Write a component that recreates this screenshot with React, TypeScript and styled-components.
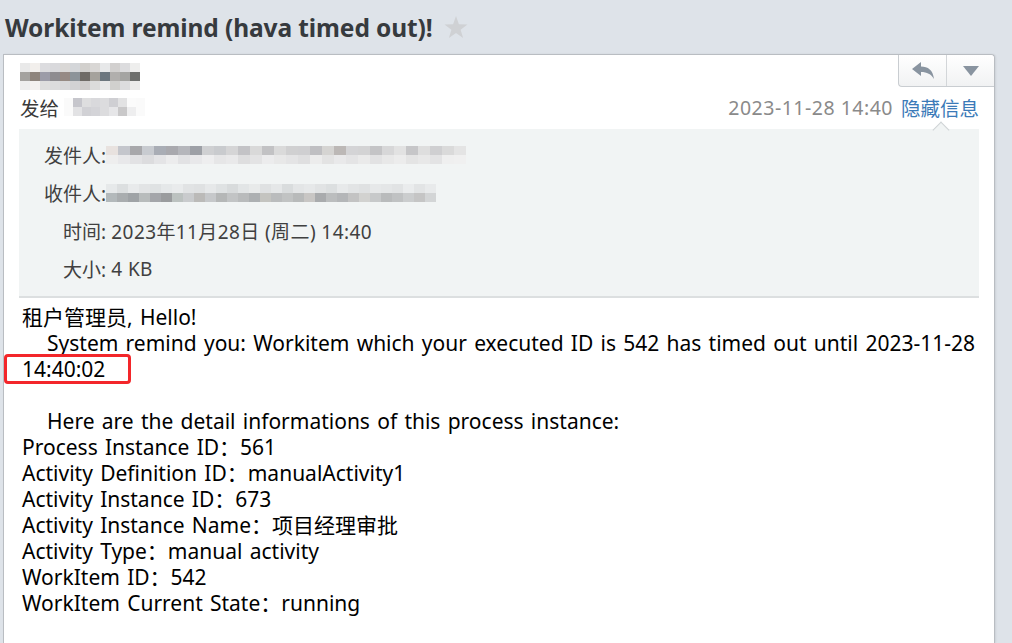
import React, { FC } from "react";
import styled, { createGlobalStyle } from "styled-components";

const GlobalStyle = createGlobalStyle`
  html, body {
    margin: 0;
    padding: 0;
    background: #dee3e9;
    font-family: "Noto Sans", "Noto Sans CJK SC", sans-serif;
    overflow: hidden;
  }
`;

const Page = styled.div`
  width: 1012px;
  height: 643px;
  padding: 10px 17px 0 3px;
  box-sizing: border-box;
  display: flex;
  flex-direction: column;
`;

const TitleRow = styled.div`
  display: flex;
  align-items: center;
  gap: 11px;
  height: 34px;
  padding-left: 2px;
`;

const Title = styled.h1`
  margin: 0;
  font-size: 24.5px;
  font-weight: 700;
  color: #363a3e;
  letter-spacing: -0.1px;
`;

const Card = styled.div`
  margin-top: 10px;
  flex: 1;
  background: #fff;
  border: 1px solid #b9bdc2;
  border-bottom: none;
  border-radius: 0 4px 0 0;
  box-shadow: 1px 0 2px rgba(0, 0, 0, 0.08);
  position: relative;
  padding: 0 15px 0 15px;
`;

const Actions = styled.div`
  position: absolute;
  top: 0;
  right: 0;
  display: flex;
  border-left: 1px solid #c9cdd1;
  border-bottom: 1px solid #c9cdd1;
  border-radius: 0 4px 0 4px;
  background: linear-gradient(#ffffff, #f1f2f3);
`;

const ActionButton = styled.div<{ $divider?: boolean }>`
  width: 47px;
  height: 31px;
  display: flex;
  align-items: center;
  justify-content: center;
  border-right: ${(p) => (p.$divider ? "1px solid #d3d6d9" : "none")};
`;

const Header = styled.div`
  padding: 8px 0 0 1px;
`;

const Pixels = styled.div<{ $w: number }>`
  display: flex;
  flex-wrap: wrap;
  width: ${(p) => p.$w}px;
  filter: blur(0.6px);
`;

const Pixel = styled.span`
  width: 10px;
  height: 8px;
`;

const SendRow = styled.div`
  display: flex;
  align-items: center;
  height: 30px;
  margin-top: 2px;
  font-size: 19.5px;
  color: #3a3a3a;
`;

const Spacer = styled.div`
  flex: 1;
`;

const DateText = styled.span`
  color: #8a8a8a;
  letter-spacing: 0.5px;
  margin-right: 8px;
`;

const HideLink = styled.a`
  color: #3b7ab8;
  text-decoration: none;
  position: relative;
`;

const Pointer = styled.span`
  position: absolute;
  left: 34px;
  bottom: -14px;
  width: 11px;
  height: 11px;
  background: #f1f4f4;
  border-left: 1px solid #cfd3d5;
  border-top: 1px solid #cfd3d5;
  transform: rotate(45deg);
`;

const Details = styled.div`
  margin-top: 7px;
  background: #f1f4f4;
  border-bottom: 2px solid #dcdfe0;
  padding: 7px 0 8px 21px;
  display: grid;
  grid-template-columns: 66px 1fr;
  grid-auto-rows: 38px;
  align-items: center;
  font-size: 19px;
  color: #404040;
`;

const Label = styled.span`
  text-align: right;
`;

const Value = styled.span`
  display: flex;
  align-items: center;
  letter-spacing: 0.4px;
`;

const Body = styled.div`
  padding: 6px 0 0 3px;
  font-size: 21px;
  line-height: 26px;
  word-spacing: 1.8px;
  color: #000;
  position: relative;
`;

const Line = styled.div<{ $indent?: boolean }>`
  text-indent: ${(p) => (p.$indent ? "25px" : "0")};
  min-height: 26px;
`;

const Highlight = styled.span`
  position: absolute;
  left: -15px;
  top: 56px;
  width: 121px;
  height: 24px;
  border: 3px solid #f3262a;
  border-radius: 4px;
`;

const blur1 = ["#e9e9e9","#f2efec","#dcdcdf","#d9d9dc","#dad8d6","#d4d6d9","#d2d0cd","#d9d7d5","#e7e8e9","#d2d0cf","#dcdcde","#eeeeed",
  "#a4a29f","#8e847c","#9c9ca8","#8e8c90","#968a84","#8c9399","#6f6b66","#a5a29c","#6c767e","#b1afad","#a4a4a2","#6e6f6d",
  "#eeeeee","#f4f1ef","#dedede","#dcdcdd","#d8d8da","#d2d2d4","#cfcccb","#dcdcdb","#e7e7e8","#d1d0ce","#dcdcde","#ecebea"];

const blurTo = ["#fafafa","#c6c6cc","#dededf","#d9d9dc","#dcdcde","#cfcfd3","#e2e2e3","#fbfbfb","#fafafa",
  "#fafafa","#e2e2e4","#d1d1d5","#d4d4d8","#dcdcde","#e6e6e8","#c9c8c9","#eeeeef","#fafafa"];

const blurFrom = ["#e8e2df","#c4c6cc","#a8a8ab","#c8cbd0","#a9adb5","#a9a9ae","#b5b6bb","#9da0a6","#cfd0d2","#c9cbce","#d5d5d6","#c3c3c6","#d9d9d9","#c2c2c4","#dadada","#d0d0d1","#cfcfd1","#bfbfc2","#d5d4d2","#bcb8b6","#d4d4d6","#d3d3d4","#c4c4c6","#d7d7d8","#e2e2e2","#c6c6c8","#dedede","#cfcfd1","#dadada","#e4e4e4",
  "#eeeeee","#e8e8ea","#e2e2e4","#dcdcde","#e4e4e6","#ececed","#e2e2e4","#e8e8ea","#eeeeef","#e6e6e7","#e9e9ea","#dededf","#e3e3e4","#ececed","#e8e8e8","#e4e4e5","#dfdfe0","#ececec","#e3e3e3","#e9e9ea","#e4e4e5","#eaeaea","#e2e2e3","#e8e8e8","#ececec","#e4e4e4","#e8e8e8","#e3e3e4","#efefef","#f0f0f0"];

const blurRecv = ["#e6e9ea","#dcdfe0","#e8eaeb","#e2e4e5","#dfe2e3","#e5e8e9","#e9ebec","#e1e3e4","#dfe1e2","#e6e8e9","#dfe2e3","#d8dbdc","#e2e5e6","#e8eaea","#dfe1e2","#e5e7e8","#d9dcdd","#e3e5e6","#e6e8e9","#e1e3e4","#dcdfe0","#e7e9ea","#e2e4e5","#dfe1e2","#e6e8e9","#e4e6e7","#e1e3e4","#eaeced","#e2e4e5","#e8eaeb",
  "#b3b9bb","#a9adaf","#9fa3a6","#b8bcbc","#a4a6aa","#9a9c9e","#bcc2c0","#c9cbcd","#bbbab8","#c6c8ca","#b5b7b7","#c2c4c5","#b9bbbc","#adb0b2","#c4c4c0","#babcbd","#c1c3c3","#b8baba","#c8c6c4","#a9abad","#bbbdbe","#b4b6b8","#c3c3c3","#d2d2d0","#c7c9ca","#b9bbbc","#c0c2c3","#cbcdce","#c5c5c5","#d3d5d6"];

const PixelStrip: FC<{ colors: string[]; cols: number; cell?: [number, number] }> = ({ colors, cols, cell = [10, 8] }) => (
  <Pixels $w={cols * cell[0]}>
    {colors.map((c, i) => (
      <Pixel key={i} style={{ background: c, width: cell[0], height: cell[1] }} />
    ))}
  </Pixels>
);

const ReplyIcon = () => (
  <svg width="24" height="18" viewBox="0 0 24 18">
    <path d="M1 7 L10 0 L10 4.5 C17 4.5 22 8 23 17 C20 12 16 10 10 10 L10 14 Z" fill="#8994a0" />
  </svg>
);

const DownIcon = () => (
  <svg width="16" height="10" viewBox="0 0 16 10">
    <path d="M0 0 H16 L8 10 Z" fill="#8994a0" />
  </svg>
);

const Star = () => (
  <svg width="24" height="23" viewBox="0 0 24 23">
    <path d="M12 0 L14.9 8.2 L23.5 8.4 L16.6 13.7 L19.1 22 L12 17 L4.9 22 L7.4 13.7 L0.5 8.4 L9.1 8.2 Z" fill="#cfd1d4" />
  </svg>
);

const rows = [
  "Process Instance ID：561",
  "Activity Definition ID：manualActivity1",
  "Activity Instance ID：673",
  "Activity Instance Name：项目经理审批",
  "Activity Type：manual activity",
  "WorkItem ID：542",
  "WorkItem Current State：running",
];

const App: FC = () => {
  return (
    <>
      <GlobalStyle />
      <Page>
        <TitleRow>
          <Title>Workitem remind (hava timed out)!</Title>
          <Star />
        </TitleRow>
        <Card>
          <Actions>
            <ActionButton $divider>
              <ReplyIcon />
            </ActionButton>
            <ActionButton>
              <DownIcon />
            </ActionButton>
          </Actions>
          <Header>
            <PixelStrip colors={blur1} cols={12} cell={[10, 9]} />
            <SendRow>
              <span>发给</span>
              <span style={{ marginLeft: 5 }}>
                <PixelStrip colors={blurTo} cols={9} cell={[9, 9]} />
              </span>
              <Spacer />
              <DateText>2023-11-28 14:40</DateText>
              <HideLink>
                隐藏信息
                <Pointer />
              </HideLink>
            </SendRow>
          </Header>
          <Details>
            <Label>发件人:</Label>
            <Value>
              <PixelStrip colors={blurFrom} cols={30} cell={[12, 9]} />
            </Value>
            <Label>收件人:</Label>
            <Value>
              <PixelStrip colors={blurRecv} cols={30} cell={[11, 9]} />
            </Value>
            <Label>时间:</Label>
            <Value>&nbsp;2023年11月28日 (周二) 14:40</Value>
            <Label>大小:</Label>
            <Value>&nbsp;4 KB</Value>
          </Details>
          <Body>
            <Line>租户管理员, Hello!</Line>
            <Line $indent>
              System remind you: Workitem which your executed ID is 542 has timed out until 2023-11-28 14:40:02
            </Line>
            <Line />
            <Line $indent>Here are the detail informations of this process instance:</Line>
            {rows.map((r) => (
              <Line key={r}>{r}</Line>
            ))}
            <Highlight />
          </Body>
        </Card>
      </Page>
    </>
  );
};

export default App;
